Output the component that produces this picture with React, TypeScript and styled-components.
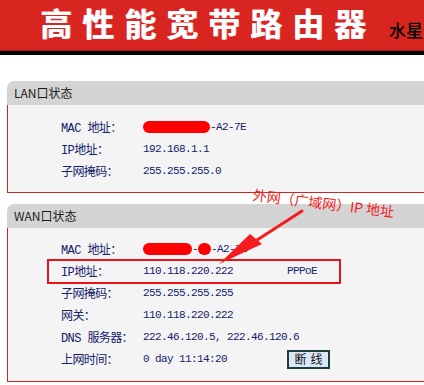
import styled, { createGlobalStyle } from 'styled-components'

const GlobalStyle = createGlobalStyle`
  html, body {
    margin: 0;
    padding: 0;
    background: #ffffff;
    overflow: hidden;
  }
  body {
    font-family: "Liberation Mono", "Noto Sans CJK SC", monospace;
  }
`;

const Page = styled.div`
  position: relative;
  width: 424px;
  height: 385px;
  overflow: hidden;
`;

const Banner = styled.div`
  height: 51px;
  background: #d8251f;
  border-bottom: 4px solid #000;
  box-shadow: inset 0 -1px 0 #a81a16;
  display: flex;
  align-items: center;
  padding-left: 40px;
  white-space: nowrap;
`;

const BannerTitle = styled.div`
  font-family: "Noto Sans CJK SC", sans-serif;
  font-size: 32px;
  font-weight: 700;
  letter-spacing: 10px;
  color: #ffffff;
  line-height: 1;
  margin-top: -7px;
  text-shadow: 1px 0 0 #f3c7d8;
`;

const BannerBrand = styled.div`
  font-family: "Noto Sans CJK SC", sans-serif;
  font-size: 17px;
  font-weight: 500;
  color: #000;
  margin-left: 13px;
  margin-top: 7px;
`;

const Main = styled.div`
  display: flex;
  flex-direction: column;
  gap: 11px;
  padding: 26px 0 0 7px;
`;

const Panel = styled.section`
  margin-right: -60px;
`;

const PanelHeader = styled.div`
  height: 24px;
  line-height: 24px;
  background: #d4d4d4;
  border-top-left-radius: 7px;
  padding-left: 7px;
  font-family: "Noto Sans CJK SC", sans-serif;
  font-size: 12px;
  color: #1a1a1a;
`;

const PanelBody = styled.div<{ $top: number; $bottom: number }>`
  background: #f4f4f4;
  border-left: 1px solid #c8281f;
  border-bottom: 1px solid #c8281f;
  padding: ${p => p.$top}px 0 ${p => p.$bottom}px 53px;
`;

const Row = styled.div<{ $highlight?: boolean }>`
  position: relative;
  display: grid;
  grid-template-columns: 82px 144px auto;
  align-items: center;
  height: 22px;
  color: #14206b;

  ${p => p.$highlight && `
    &::after {
      content: "";
      position: absolute;
      left: -14px;
      top: -1px;
      width: 290px;
      height: 21px;
      border: 2px solid #e8141a;
    }
  `}
`;

const Label = styled.span`
  font-family: "Liberation Mono", "Noto Sans CJK SC", monospace;
  font-size: 12px;
  letter-spacing: -0.6px;
  white-space: nowrap;
`;

const Value = styled.span`
  font-family: "Liberation Mono", "Noto Sans CJK SC", monospace;
  font-size: 11px;
  letter-spacing: -0.6px;
  white-space: nowrap;
  display: flex;
  align-items: center;
`;

const Blot = styled.span<{ $w: number }>`
  display: inline-block;
  width: ${p => p.$w}px;
  height: 12px;
  border-radius: 6px;
  background: #ff0000;
`;

const DisconnectButton = styled.button`
  width: 43px;
  height: 19px;
  padding: 0;
  background: #d9e7f7;
  border: 2px solid #1f3d3d;
  color: #111;
  font-family: "Noto Sans CJK SC", sans-serif;
  font-size: 12px;
  letter-spacing: 4px;
  text-indent: 4px;
  line-height: 14px;
`;

const Annotation = styled.div`
  position: absolute;
  left: 253px;
  top: 186px;
  font-family: "Noto Sans CJK SC", sans-serif;
  font-size: 14px;
  line-height: 16px;
  color: #f41c1c;
  white-space: nowrap;
  transform: rotate(7deg);
  transform-origin: left center;
`;

const Overlay = styled.svg`
  position: absolute;
  left: 0;
  top: 0;
  pointer-events: none;
`;

const lan = [
  { label: 'MAC 地址：', value: <><Blot $w={67} />-A2-7E</> },
  { label: 'IP地址：', value: '192.168.1.1' },
  { label: '子网掩码：', value: '255.255.255.0' },
];

const App = () => (
  <Page>
    <GlobalStyle />
    <Banner>
      <BannerTitle>高性能宽带路由器</BannerTitle>
      <BannerBrand>水星</BannerBrand>
    </Banner>
    <Main>
      <Panel>
        <PanelHeader>LAN口状态</PanelHeader>
        <PanelBody $top={11} $bottom={10}>
          {lan.map(r => (
            <Row key={r.label}>
              <Label>{r.label}</Label>
              <Value>{r.value}</Value>
            </Row>
          ))}
        </PanelBody>
      </Panel>
      <Panel>
        <PanelHeader>WAN口状态</PanelHeader>
        <PanelBody $top={10} $bottom={11}>
          <Row>
            <Label>MAC 地址：</Label>
            <Value><Blot $w={49} />-<Blot $w={13} />-A2-7E</Value>
          </Row>
          <Row $highlight>
            <Label>IP地址：</Label>
            <Value>110.118.220.222</Value>
            <Value>PPPoE</Value>
          </Row>
          <Row>
            <Label>子网掩码：</Label>
            <Value>255.255.255.255</Value>
          </Row>
          <Row>
            <Label>网关：</Label>
            <Value>110.118.220.222</Value>
          </Row>
          <Row>
            <Label>DNS 服务器：</Label>
            <Value>222.46.120.5, 222.46.120.6</Value>
          </Row>
          <Row>
            <Label>上网时间：</Label>
            <Value>0 day 11:14:20</Value>
            <DisconnectButton>断线</DisconnectButton>
          </Row>
        </PanelBody>
      </Panel>
    </Main>
    <Annotation>外网（广域网）IP 地址</Annotation>
    <Overlay width="424" height="385" viewBox="0 0 424 385">
      <line x1="302" y1="211" x2="240" y2="251" stroke="#f41c1c" strokeWidth="3" strokeLinecap="round" />
      <polygon points="219,264 262,244 250,234" fill="#f41c1c" />
    </Overlay>
  </Page>
);

export default App
